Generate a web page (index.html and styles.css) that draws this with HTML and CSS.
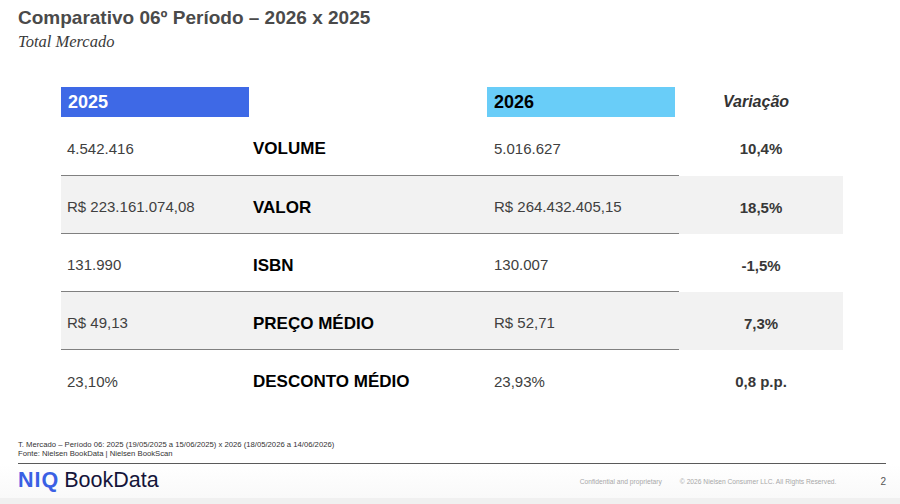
FILE: index.html
```html
<!DOCTYPE html>
<html lang="pt">
<head>
<meta charset="utf-8">
<title>Comparativo 06º Período – 2026 x 2025</title>
<link rel="stylesheet" href="styles.css">
</head>
<body>
<div class="page">
  <header class="head">
    <h1 class="title">Comparativo 06º Período – 2026 x 2025</h1>
    <p class="subtitle">Total Mercado</p>
  </header>

  <div class="table">
    <div class="hcell"><span class="tag tag-2025">2025</span></div>
    <div class="hcell"></div>
    <div class="hcell"><span class="tag tag-2026">2026</span></div>
    <div class="hcell hvar">Variação</div>

    <div class="row">
      <div class="c val line">4.542.416</div>
      <div class="c lab line">VOLUME</div>
      <div class="c val v2 line">5.016.627</div>
      <div class="c var">10,4%</div>
    </div>
    <div class="row alt">
      <div class="c val line">R$ 223.161.074,08</div>
      <div class="c lab line">VALOR</div>
      <div class="c val v2 line">R$ 264.432.405,15</div>
      <div class="c var">18,5%</div>
    </div>
    <div class="row">
      <div class="c val line">131.990</div>
      <div class="c lab line">ISBN</div>
      <div class="c val v2 line">130.007</div>
      <div class="c var">-1,5%</div>
    </div>
    <div class="row alt">
      <div class="c val line">R$ 49,13</div>
      <div class="c lab line">PREÇO MÉDIO</div>
      <div class="c val v2 line">R$ 52,71</div>
      <div class="c var">7,3%</div>
    </div>
    <div class="row last">
      <div class="c val">23,10%</div>
      <div class="c lab">DESCONTO MÉDIO</div>
      <div class="c val v2">23,93%</div>
      <div class="c var">0,8 p.p.</div>
    </div>
  </div>

  <div class="note">
    <p>T. Mercado – Período 06: 2025 (19/05/2025 a 15/06/2025) x 2026 (18/05/2026 a 14/06/2026)</p>
    <p>Fonte: Nielsen BookData | Nielsen BookScan</p>
  </div>

  <div class="sep"></div>

  <footer class="foot">
    <div class="logo"><span class="niq">NIQ</span><span class="bd">BookData</span></div>
    <div class="legal">
      <span>Confidential and proprietary</span>
      <span>© 2026 Nielsen Consumer LLC. All Rights Reserved.</span>
    </div>
    <div class="pnum">2</div>
  </footer>
  <div class="band"></div>
</div>
</body>
</html>
```
FILE: styles.css
```css
* { box-sizing: border-box; }
html, body { margin: 0; padding: 0; background: #fff; }
body { font-family: "Liberation Sans", Arial, sans-serif; }

.page {
  width: 900px;
  height: 504px;
  overflow: hidden;
  display: flex;
  flex-direction: column;
}

.head { padding: 7px 0 0 18px; }
.title {
  margin: 0;
  font-size: 19px;
  line-height: 22px;
  font-weight: bold;
  color: #4a4a4a;
}
.subtitle {
  margin: 3px 0 0 0;
  font-family: "Liberation Serif", "Times New Roman", serif;
  font-style: italic;
  font-size: 16.5px;
  line-height: 20px;
  color: #3a3a3a;
}

.table {
  margin: 35px 0 0 61px;
  display: grid;
  grid-template-columns: 188px 238px 192px 164px;
  grid-template-rows: 30px 59px 58px 58px 58px 58px;
}
.row { display: contents; }

.hcell { height: 30px; }
.tag {
  display: block;
  width: 188px;
  height: 30px;
  padding-left: 7px;
  font-size: 18px;
  line-height: 30px;
  font-weight: bold;
}
.tag-2025 { background: #3e69e6; color: #fff; }
.tag-2026 { background: #69cdf8; color: #000; }
.hvar {
  font-size: 16px;
  line-height: 30px;
  font-weight: bold;
  font-style: italic;
  color: #333;
  text-align: center;
  padding-right: 10px;
}

.c {
  display: flex;
  align-items: center;
  padding-top: 4px;
}
.row.alt .c { background: #f2f2f2; }
.line { border-bottom: 1px solid #808080; }
.val {
  padding-left: 6px;
  font-size: 15px;
  color: #404040;
}
.v2 { padding-left: 7px; }
.lab {
  padding-left: 4px;
  padding-top: 6px;
  font-size: 17px;
  font-weight: bold;
  color: #000;
}
.var {
  justify-content: center;
  font-size: 15px;
  font-weight: bold;
  color: #383838;
}

.note {
  margin: 32px 0 0 18px;
  font-size: 7.7px;
  line-height: 9px;
  color: #333;
}
.note p { margin: 0; }

.sep {
  margin: 5px 14px 0 18px;
  height: 1px;
  background: #5a5a5a;
}

.foot {
  height: 34px;
  display: flex;
  align-items: center;
  padding: 0 14px 0 18px;
  background: linear-gradient(#ffffff, #f9f9f9);
}
.logo {
  display: flex;
  align-items: baseline;
  font-size: 21.5px;
  line-height: 1;
}
.niq {
  font-weight: bold;
  color: #3a60e4;
  letter-spacing: 1px;
  margin-right: 5px;
}
.bd { color: #15153a; }
.legal {
  margin-left: auto;
  display: flex;
  gap: 18px;
  font-size: 6.7px;
  color: #a8a8a8;
}
.pnum {
  margin-left: 44px;
  font-size: 10px;
  color: #555;
}
.band {
  flex: 1;
  background: #f0f0f0;
}
```
